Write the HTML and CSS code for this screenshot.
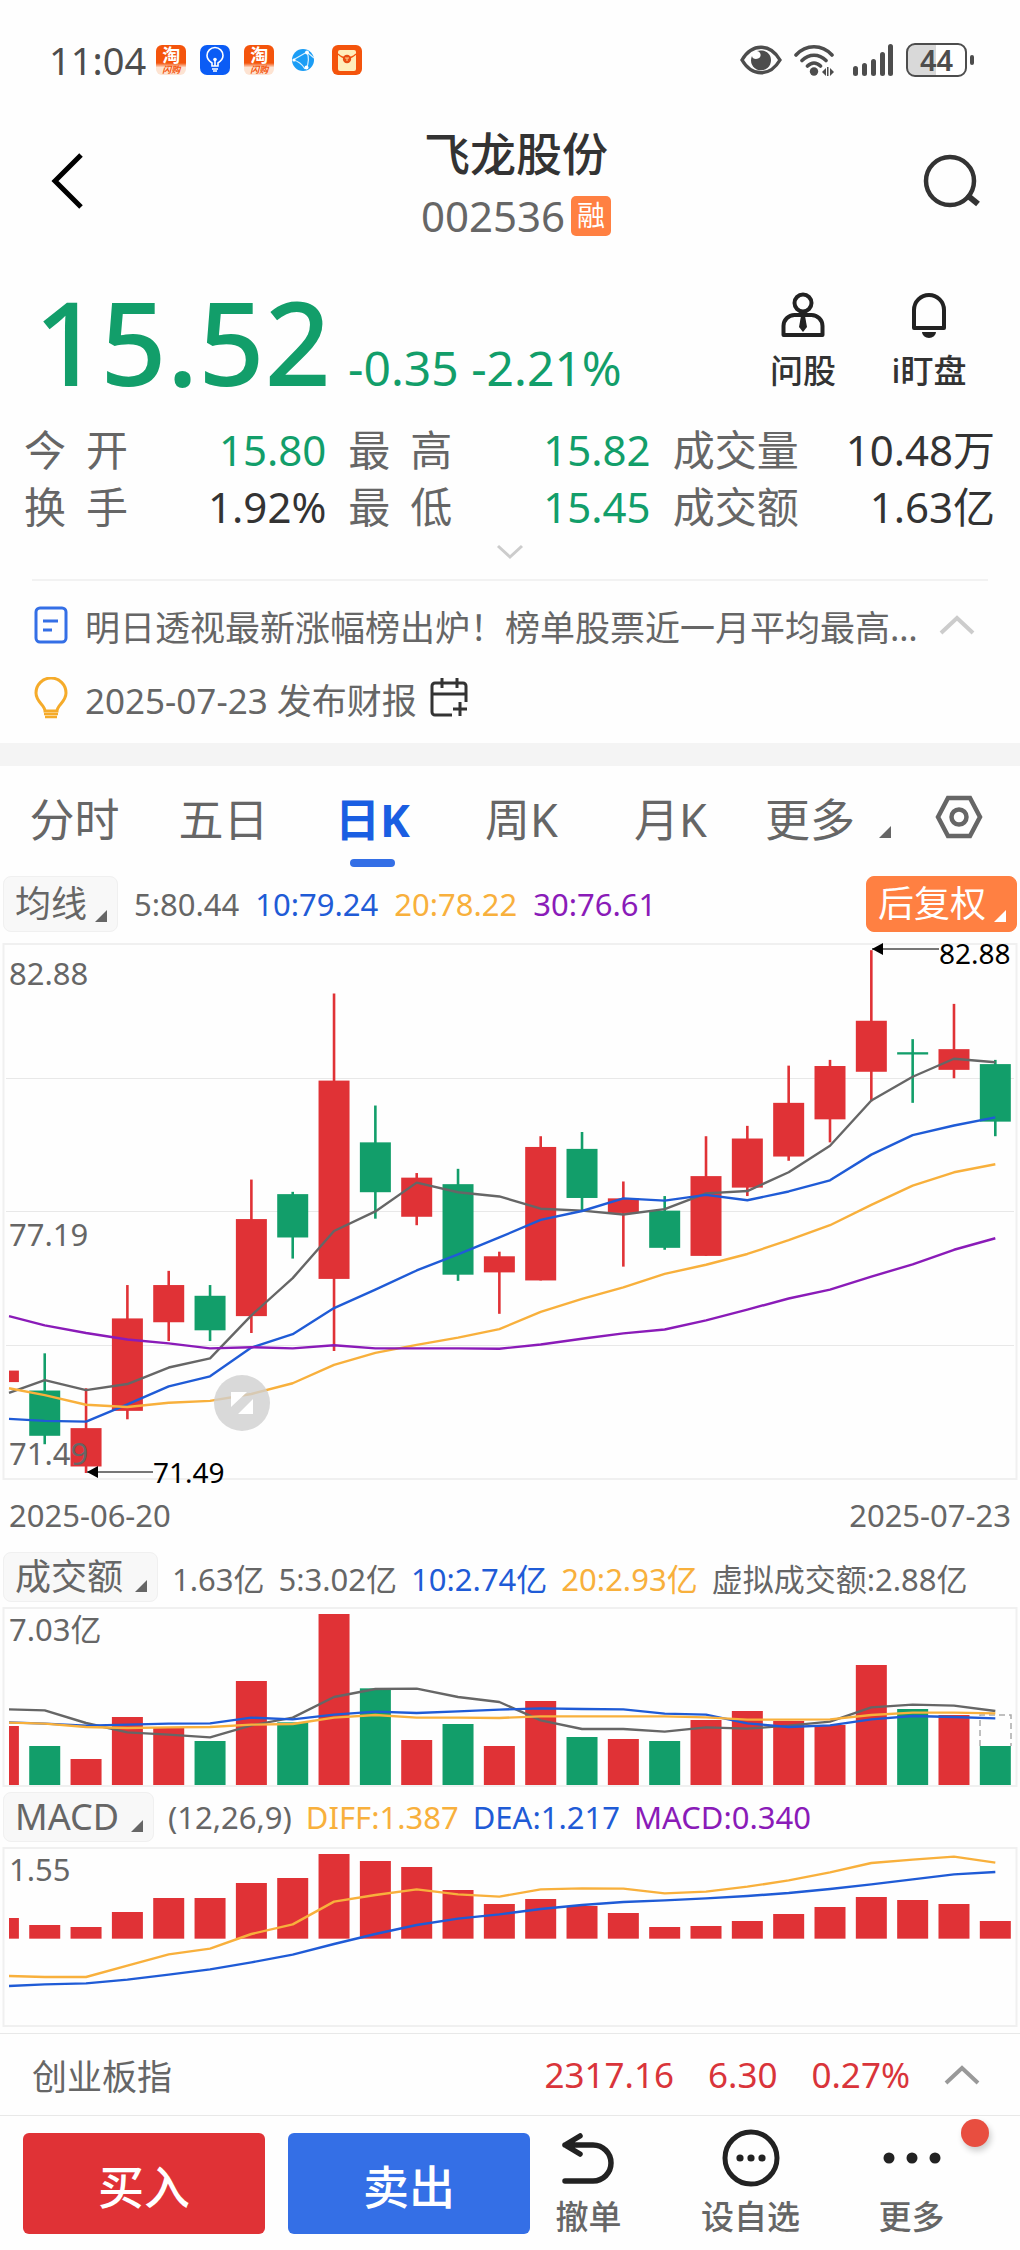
FILE: index.html
```html
<!DOCTYPE html>
<html lang="zh-CN">
<head>
  <meta charset="UTF-8" />
  <meta name="viewport" content="width=device-width, initial-scale=1.0"/>
  <title>飞龙股份 002536</title>
  <link rel="stylesheet" href="styles.css">
</head>
<body>
  <div class="status-bar">
    <span class="clock">11:04</span>
    <span class="app-icon taobao"><b>淘</b><i>闪购</i></span>
    <svg class="app-icon" viewBox="0 0 30 30">
      <rect width="30" height="30" rx="7" fill="#0b5cf5"/>
      <path d="M12 21v-3c-3-2-5-4-5-7.500a8 8 0 0 1 16 0c0 3.500-2 5.500-5 7.500v3zM12 24h6M13 26h4M15 15v6" fill="none" stroke="#fff" stroke-width="1.600"/>
      <circle cx="15" cy="14.500" r="1.800" fill="#fff"/>
    </svg>
    <span class="app-icon taobao"><b>淘</b><i>闪购</i></span>
    <svg class="app-icon" viewBox="0 0 30 30">
      <circle cx="15" cy="15" r="11" fill="#1b9df5"/>
      <path d="M5 15l14-8M5 15c5 1 9 4 12 9M19 7c2 5 2 11-1 17M19 7l7 6" fill="none" stroke="#d9f0ff" stroke-width="1.200"/>
      <circle cx="19" cy="7.500" r="2" fill="#fff"/><circle cx="6" cy="15" r="1.600" fill="#fff"/><circle cx="18.500" cy="22.500" r="2" fill="#fff"/>
    </svg>
    <svg class="app-icon" viewBox="0 0 30 30">
      <rect width="30" height="30" rx="6" fill="#f4540c"/>
      <rect x="6" y="5" width="18" height="21" rx="2" fill="#ffeebb"/>
      <path d="M6 9c3 3 5 4 9 4s6-1 9-4" fill="none" stroke="#f4540c" stroke-width="1.200"/>
      <circle cx="15" cy="14" r="4.200" fill="#e84d12"/><path d="M13 13h4M15 13v3" stroke="#ffd28a" stroke-width="1"/>
    </svg>
    <div class="status-right">
      <svg width="42" height="30" viewBox="0 0 42 30">
        <path d="M2 15C12-2 30-2 40 15C30 32 12 32 2 15z" fill="none" stroke="#4d4d4d" stroke-width="3.400"/>
        <path d="M17 6c5 1 5 8-1 8-2 0-4-1-4-3a10 10 0 1 0 19 4c0-7-7-11-14-9z" fill="#4d4d4d"/>
      </svg>
      <svg width="41" height="32" viewBox="0 0 41 32">
        <g fill="none" stroke="#4d4d4d" stroke-width="3.600" stroke-linecap="round">
          <path d="M2 11C12 0 28 0 38 11M8 16.500c7-7 17-7 24 0M13.500 22c4-4 9-4 13 0"/>
        </g>
        <circle cx="20" cy="27.500" r="4.200" fill="#4d4d4d"/>
        <path d="M28 28l4-4v8zM40 28l-4-4v8zM33 23h1.500v9H33z" fill="#4d4d4d"/>
      </svg>
      <svg class="signal" width="41" height="32" viewBox="0 0 41 32" fill="#4d4d4d">
        <rect x="0" y="22" width="5" height="10" rx="2.500"/><rect x="9" y="19" width="5" height="13" rx="2.500"/>
        <rect x="18" y="15" width="5" height="17" rx="2.500"/><rect x="27" y="8" width="5" height="24" rx="2.500"/>
        <rect x="35" y="0" width="5" height="32" rx="2.500"/>
      </svg>
      <span class="battery">44</span>
    </div>
  </div>

  <header class="header">
    <button class="icon-btn" aria-label="返回">
      <svg width="34" height="58" viewBox="0 0 34 58"><path d="M30 3L4 29l26 26" fill="none" stroke="#000" stroke-width="5"/></svg>
    </button>
    <div class="stock">
      <h1>飞龙股份</h1>
      <p>002536<span class="margin-tag">融</span></p>
    </div>
    <button class="icon-btn search" aria-label="搜索">
      <svg width="58" height="54" viewBox="0 0 58 54"><circle cx="27" cy="27" r="24" fill="none" stroke="#333" stroke-width="4.500"/><path d="M44 41l11 9" stroke="#333" stroke-width="6"/></svg>
    </button>
  </header>

  <section class="price-row">
    <div class="price">15.52</div>
    <div class="change">-0.35 -2.21%</div>
    <div class="tools">
      <button class="tool">
        <svg width="46" height="46" viewBox="0 0 46 46">
          <g fill="none" stroke="#222" stroke-width="4"><circle cx="23" cy="11" r="8.500"/><path d="M3.500 43V34a11 11 0 0 1 11-11h17a11 11 0 0 1 11 11v9z" stroke-linejoin="round"/></g>
          <path d="M21 24h4l2 11-4 5-4-5z" fill="#222"/>
        </svg>
        问股
      </button>
      <button class="tool">
        <svg width="46" height="46" viewBox="0 0 46 46">
          <path d="M8 36V18a15 15 0 0 1 30 0v18z" fill="none" stroke="#222" stroke-width="4" stroke-linejoin="round"/>
          <path d="M16 40h14a7 6 0 0 1-14 0z" fill="#222"/>
        </svg>
        i盯盘
      </button>
    </div>
  </section>

  <section class="quotes">
    <div class="quote"><span class="spread">今 开</span><b class="down">15.80</b></div>
    <div class="quote"><span class="spread">最 高</span><b class="down">15.82</b></div>
    <div class="quote"><span>成交量</span><b>10.48万</b></div>
    <div class="quote"><span class="spread">换 手</span><b>1.92%</b></div>
    <div class="quote"><span class="spread">最 低</span><b class="down">15.45</b></div>
    <div class="quote"><span>成交额</span><b>1.63亿</b></div>
  </section>
  <button class="expand" aria-label="展开">
    <svg width="28" height="16" viewBox="0 0 28 16"><path d="M2 2l12 11L26 2" fill="none" stroke="#ccc" stroke-width="3"/></svg>
  </button>

  <section class="notices">
    <div class="notice first">
      <svg width="34" height="40" viewBox="0 0 34 40"><rect x="2" y="3" width="30" height="34" rx="4" fill="none" stroke="#346fe6" stroke-width="3"/><path d="M9 16h15M9 25h9" stroke="#346fe6" stroke-width="3"/></svg>
      <a href="#">明日透视最新涨幅榜出炉！榜单股票近一月平均最高涨幅超过大盘</a>
      <svg class="fold" width="36" height="20" viewBox="0 0 36 20"><path d="M2 18L18 3l16 15" fill="none" stroke="#ccc" stroke-width="4"/></svg>
    </div>
    <div class="notice">
      <svg width="34" height="42" viewBox="0 0 34 42"><path d="M11 34c0-6-9-9-9-18a15 15 0 0 1 30 0c0 9-9 12-9 18z" fill="none" stroke="#f5ab2a" stroke-width="3"/><path d="M10 37h14M11 40h12" stroke="#f5ab2a" stroke-width="2.500"/></svg>
      <span>2025-07-23 发布财报</span>
      <svg width="38" height="40" viewBox="0 0 38 40"><path d="M22 37H5a3 3 0 0 1-3-3V8a3 3 0 0 1 3-3h28a3 3 0 0 1 3 3v16M2 16h34M12 0v10M27 0v10M30 24v14M23 31h14" fill="none" stroke="#333" stroke-width="3"/></svg>
    </div>
  </section>

  <nav class="tabs">
    <button>分时</button>
    <button>五日</button>
    <button class="active">日K</button>
    <button>周K</button>
    <button>月K</button>
    <button class="more">更多<i class="tri"></i></button>
    <button aria-label="设置">
      <svg width="48" height="44" viewBox="0 0 48 44"><g fill="none" stroke="#666" stroke-width="4.500"><path d="M13 3h22l10 19-10 19H13L3 22z"/><circle cx="24" cy="22" r="7.500"/></g></svg>
    </button>
  </nav>

  <div class="legend main">
    <button class="chip">均线<i class="tri"></i></button>
    <span>5:80.44</span><span class="c-blue">10:79.24</span><span class="c-gold">20:78.22</span><span class="c-purple">30:76.61</span>
    <button class="chip orange">后复权<i class="tri"></i></button>
  </div>
  <svg class="chart" id="price-chart" viewBox="0 0 1020 540"></svg>
  <div class="dates"><span>2025-06-20</span><span>2025-07-23</span></div>

  <div class="legend">
    <button class="chip">成交额<i class="tri"></i></button>
    <span>1.63亿</span><span>5:3.02亿</span><span class="c-blue">10:2.74亿</span><span class="c-gold">20:2.93亿</span><span>虚拟成交额:2.88亿</span>
  </div>
  <svg class="chart" id="volume-chart" viewBox="0 0 1020 182"></svg>

  <div class="legend">
    <button class="chip">MACD<i class="tri"></i></button>
    <span>(12,26,9)</span><span class="c-gold">DIFF:1.387</span><span class="c-blue">DEA:1.217</span><span class="c-purple">MACD:0.340</span>
  </div>
  <svg class="chart" id="macd-chart" viewBox="0 0 1020 182"></svg>

  <section class="index-row">
    <span class="index-name">创业板指</span>
    <span>2317.16</span><span>6.30</span><span>0.27%</span>
    <svg width="36" height="20" viewBox="0 0 36 20"><path d="M2 18L18 3l16 15" fill="none" stroke="#999" stroke-width="4"/></svg>
  </section>

  <footer class="actions">
    <button class="trade buy">买入</button>
    <button class="trade sell">卖出</button>
    <button class="action">
      <svg width="58" height="58" viewBox="0 0 58 58"><path d="M5 16h28a18 18 0 0 1 0 36H5M20 7L5 16l15 9" fill="none" stroke="#222" stroke-width="5.500" stroke-linecap="round" stroke-linejoin="round"/></svg>
      撤单
    </button>
    <button class="action">
      <svg width="58" height="58" viewBox="0 0 58 58"><circle cx="29" cy="29" r="26" fill="none" stroke="#222" stroke-width="5"/><g fill="#222"><circle cx="18" cy="29" r="3.600"/><circle cx="29" cy="29" r="3.600"/><circle cx="40" cy="29" r="3.600"/></g></svg>
      设自选
    </button>
    <button class="action">
      <svg width="58" height="58" viewBox="0 0 58 58" fill="#222"><circle cx="6" cy="29" r="5.500"/><circle cx="29" cy="29" r="5.500"/><circle cx="52" cy="29" r="5.500"/></svg>
      更多
      <i class="dot"></i>
    </button>
  </footer>

  <script>
    const RED = '#e03236', GREEN = '#129e6a';
    const GREY = '#666', BLUE = '#1f5bd6', GOLD = '#f8b03c', PURPLE = '#8a1bb8';
    const STEP = 41.33, BAR = 31;

    // r = up, g = down: [colour, high, body top, body bottom, low]
    const candles = [
      ['r', 1146, 1146, 1176, 1176], ['g', 1101, 1198, 1316, 1338], ['r', 1192, 1296, 1396, 1413],
      ['r', 923, 1010, 1251, 1273], ['r', 886, 923, 1020, 1069], ['g', 923, 951, 1041, 1069],
      ['r', 648, 751, 1004, 1048], ['g', 680, 686, 799, 854], ['r', 163, 390, 907, 1095],
      ['g', 455, 551, 681, 750], ['r', 631, 643, 745, 767], ['g', 620, 660, 896, 912],
      ['r', 836, 848, 890, 998], ['r', 535, 563, 911, 911], ['g', 524, 568, 696, 728],
      ['r', 653, 697, 735, 875], ['g', 691, 729, 826, 831], ['r', 535, 639, 847, 847],
      ['r', 508, 541, 669, 691], ['r', 351, 448, 588, 599], ['r', 336, 352, 491, 551],
      ['r', 50, 234, 367, 444], ['g', 282, 316, 322, 448], ['r', 190, 308, 362, 384],
      ['g', 336, 347, 497, 535]
    ];
    const ma5 = [1204, 1171, 1197, 1181, 1138, 1114, 1002, 905, 782, 731, 656, 681, 692, 724, 729, 739, 725, 684, 678, 629, 560, 442, 380, 333, 342];
    const ma10 = [1272, 1277, 1279, 1234, 1187, 1161, 1086, 1051, 983, 935, 885, 843, 799, 753, 730, 697, 703, 688, 702, 679, 650, 583, 532, 507, 486];
    const ma20 = [1192, 1210, 1235, 1241, 1230, 1225, 1207, 1179, 1131, 1100, 1079, 1060, 1038, 993, 959, 929, 894, 870, 842, 806, 767, 714, 664, 629, 608];
    const ma30 = [1004, 1028, 1048, 1065, 1075, 1088, 1085, 1088, 1080, 1088, 1088, 1088, 1089, 1078, 1063, 1049, 1039, 1015, 987, 958, 935, 901, 869, 831, 801];

    const volume = [585, 645, 684, 558, 590, 630, 450, 574, 249, 472, 627, 579, 645, 510, 618, 624, 630, 567, 540, 570, 582, 402, 534, 552, 645];
    const vol5 = [535, 538, 576, 604, 611, 619, 583, 560, 498, 474, 473, 498, 513, 568, 594, 594, 602, 589, 593, 584, 572, 529, 521, 524, 540];
    const vol10 = [574, 578, 584, 581, 578, 577, 560, 565, 551, 542, 546, 541, 536, 532, 534, 535, 548, 551, 577, 588, 583, 565, 555, 558, 562];
    const vol20 = [575, 578, 588, 591, 589, 588, 581, 579, 560, 552, 560, 560, 561, 556, 556, 556, 556, 559, 566, 566, 565, 552, 545, 545, 547];

    const macd = [1161, 1182, 1188, 1143, 1101, 1101, 1056, 1041, 969, 990, 1008, 1077, 1119, 1104, 1125, 1146, 1188, 1185, 1170, 1149, 1128, 1098, 1107, 1119, 1170];
    const diff = [1335, 1338, 1338, 1304, 1270, 1253, 1209, 1180, 1112, 1092, 1075, 1090, 1097, 1075, 1072, 1073, 1087, 1082, 1067, 1048, 1024, 996, 986, 977, 995];
    const dea = [1365, 1360, 1357, 1346, 1331, 1315, 1294, 1271, 1239, 1209, 1182, 1163, 1150, 1134, 1122, 1113, 1108, 1102, 1095, 1086, 1074, 1060, 1045, 1030, 1023];

    const priceY = v => v / 2.607 - 11;
    const volY = v => v / 3 - 75;
    const macdY = v => v / 3 - 315;
    const x = i => 3.4 + STEP * i;

    // the first bar is cut off by the left edge of the plot
    function bar(i, top, bottom, color) {
      const left = Math.max(9, x(i) - BAR / 2);
      return `<rect x="${left}" y="${top}" width="${x(i) + BAR / 2 - left}" height="${bottom - top}" fill="${color}"/>`;
    }

    function line(data, y, color) {
      const points = data.map((v, i) => `${Math.max(9, x(i))},${y(v)}`).join(' ');
      return `<polyline points="${points}" fill="none" stroke="${color}" stroke-width="2.4" stroke-linejoin="round"/>`;
    }

    function frame(height) {
      return `<rect x="3.5" y="2" width="1013" height="${height}" fill="none" stroke="#f0f0f0" stroke-width="2"/>`;
    }

    function drawPrice() {
      let out = frame(535);
      [136, 269, 403].forEach(y => {
        out += `<path d="M6 ${y}.500H1014" stroke="#e8e8e8"/>`;
      });
      candles.forEach(([c, high, top, bottom, low], i) => {
        const color = c === 'r' ? RED : GREEN;
        if (low > bottom || high < top) {
          out += `<path d="M${x(i)} ${priceY(high)}V${priceY(low)}" stroke="${color}" stroke-width="2.6"/>`;
        }
        out += bar(i, priceY(top), priceY(bottom), color);
      });
      out += line(ma5, priceY, GREY) + line(ma10, priceY, BLUE) + line(ma20, priceY, GOLD) + line(ma30, priceY, PURPLE);
      out += `<text x="9" y="43">82.88</text><text x="9" y="304">77.19</text><text x="9" y="523">71.49</text>`;
      // high and low markers
      out += `<path d="M872 7H939M87 530H153" stroke="#777" stroke-width="2"/>
        <path d="M872 7l11-6v12zM87 530l11-6v12z" fill="#000"/>
        <text class="mark" x="939" y="22">82.88</text><text class="mark" x="153" y="541">71.49</text>`;
      // full screen handle
      out += `<circle cx="242" cy="461" r="28" fill="#cfcfcf" opacity=".8"/>
        <path d="M231 450h16l-16 15zM253 457v15h-15z" fill="#fff"/>`;
      document.getElementById('price-chart').innerHTML = out;
    }

    function drawVolume() {
      let out = frame(178);
      volume.forEach((v, i) => {
        out += bar(i, volY(v), 179, candles[i][0] === 'r' ? RED : GREEN);
      });
      out += `<path d="M980 140V109H1011V140" fill="none" stroke="#aaa" stroke-width="1.5" stroke-dasharray="6 4"/>`;
      out += line(vol5, volY, GREY) + line(vol10, volY, BLUE) + line(vol20, volY, GOLD);
      out += `<text x="9" y="35">7.03亿</text>`;
      document.getElementById('volume-chart').innerHTML = out;
    }

    function drawMacd() {
      let out = frame(178);
      macd.forEach((v, i) => {
        out += bar(i, macdY(v), macdY(1223), RED);
      });
      out += line(diff, macdY, GOLD) + line(dea, macdY, BLUE);
      out += `<text x="9" y="35">1.55</text>`;
      document.getElementById('macd-chart').innerHTML = out;
    }

    drawPrice();
    drawVolume();
    drawMacd();
  </script>
</body>
</html>
```
FILE: styles.css
```css
* {
  box-sizing: border-box;
}
body {
  margin: 0;
  background: #fefefe;
  color: #666;
  font-family: "Noto Sans", "Noto Sans CJK SC", sans-serif;
  font-size: 31px;
}
button {
  border: 0;
  padding: 0;
  margin: 0;
  background: none;
  color: inherit;
  font: inherit;
  cursor: pointer;
}
svg {
  display: block;
  flex: none;
}
.status-bar {
  display: flex;
  align-items: center;
  gap: 14px;
  height: 110px;
  padding: 10px 53px 0 49px;
  color: #4d4d4d;
}
.clock {
  font-size: 38px;
  line-height: 40px;
  margin-right: -4px;
}
.app-icon {
  width: 30px;
  height: 30px;
}
.taobao {
  display: flex;
  flex-direction: column;
  align-items: center;
  border-radius: 6px;
  overflow: hidden;
  background: linear-gradient(#f4540c 60%, #fde3d2 75%);
}
.taobao b {
  color: #fff;
  font-size: 18px;
  line-height: 20px;
}
.taobao i {
  color: #f4540c;
  font-size: 9px;
  font-weight: bold;
  line-height: 10px;
}
.status-right {
  display: flex;
  align-items: center;
  gap: 12px;
  margin-left: auto;
}
.signal {
  margin-left: 6px;
}
.battery {
  position: relative;
  width: 61px;
  height: 34px;
  border: 2px solid #4d4d4d;
  border-radius: 9px;
  background: linear-gradient(90deg, #d9d9d9 50%, #fff 50%);
  font-size: 29px;
  font-weight: 600;
  line-height: 30px;
  text-align: center;
}
.battery::after {
  content: "";
  position: absolute;
  right: -9px;
  top: 10px;
  width: 4px;
  height: 10px;
  border-radius: 2px;
  background: #4d4d4d;
}
.header {
  display: flex;
  justify-content: space-between;
  align-items: center;
  padding: 0 39px 0 51px;
}
.stock {
  padding: 12px 0 5px;
  text-align: center;
}
.stock h1 {
  margin: 0;
  color: #333;
  font-size: 46px;
  font-weight: 500;
  line-height: 62px;
}
.stock p {
  display: flex;
  align-items: center;
  justify-content: center;
  gap: 6px;
  margin: 0;
  font-size: 42px;
  line-height: 63px;
}
.icon-btn {
  width: 58px;
}
.margin-tag {
  width: 40px;
  height: 40px;
  border-radius: 5px;
  background: #ff8042;
  color: #fff;
  font-size: 28px;
  line-height: 38px;
}
.price-row {
  display: flex;
  align-items: baseline;
  padding: 20px 28px 11px 34px;
  color: #129e6a;
}
.price {
  width: 314px;
  font-size: 116px;
  font-weight: 500;
  line-height: 138px;
}
.change {
  font-size: 48px;
  line-height: 60px;
}
.tools {
  display: flex;
  align-self: flex-start;
  margin-left: auto;
  padding-top: 20px;
}
.tool {
  display: flex;
  flex-direction: column;
  align-items: center;
  gap: 11px;
  width: 126px;
  color: #333;
  font-size: 33px;
  font-weight: 500;
  line-height: 44px;
}
.quotes {
  display: grid;
  grid-template-columns: 302fr 302fr 322fr;
  column-gap: 22px;
  padding: 0 25px 0 24px;
  font-size: 42px;
  line-height: 57px;
}
.quote {
  display: flex;
  justify-content: space-between;
}
.quote b {
  color: #333;
  font-weight: normal;
}
.quote b.down {
  color: #129e6a;
}
.spread {
  width: 104px;
  text-align-last: justify;
}
.expand {
  display: flex;
  justify-content: center;
  width: 100%;
  height: 44px;
  padding-top: 9px;
}
.notices {
  margin: 0 32px;
  padding-bottom: 16px;
  border-top: 2px solid #f2f2f2;
}
.notice {
  display: flex;
  align-items: center;
  gap: 13px;
  height: 58px;
  padding: 0 13px 0 2px;
  margin-left: 0;
  font-size: 35px;
}
.notice.first {
  height: 88px;
}
.notice a {
  flex: 1;
  min-width: 0;
  margin-left: 4px;
  overflow: hidden;
  color: inherit;
  text-decoration: none;
  text-overflow: ellipsis;
  white-space: nowrap;
}
.notice span {
  margin-left: 4px;
}
.tabs {
  display: grid;
  grid-template-columns: repeat(5, 149fr) 153fr 122fr;
  border-top: 23px solid #f4f4f4;
}
.tabs button {
  position: relative;
  display: flex;
  align-items: center;
  justify-content: center;
  height: 102px;
  font-size: 45px;
}
.tabs .active {
  color: #1a5ee2;
  font-weight: bold;
}
.tabs .active::after {
  content: "";
  position: absolute;
  bottom: 1px;
  width: 45px;
  height: 8px;
  border-radius: 4px;
  background: #346fe6;
}
.tri {
  align-self: flex-end;
  width: 0;
  height: 0;
  border-left: 12px solid transparent;
  border-bottom: 12px solid currentColor;
}
.tabs .tri {
  margin: 0 0 30px 24px;
}
.tabs .more {
  justify-content: flex-end;
  padding-right: 7px;
}
.legend {
  display: flex;
  align-items: center;
  gap: 14px;
  padding: 4px 3px;
  white-space: nowrap;
}
.legend.main {
  gap: 16px;
  padding: 8px 3px 10px;
}
.chip {
  display: flex;
  align-items: center;
  gap: 12px;
  height: 50px;
  padding: 0 10px 0 11px;
  border: 1px solid #f0f0f0;
  border-radius: 8px;
  background: #f8f8f8;
  font-size: 36px;
  line-height: 48px;
}
.main .chip {
  gap: 8px;
  height: 56px;
}
.chip .tri {
  margin-bottom: 9px;
}
.chip.orange {
  margin-left: auto;
  border-color: #ff8042;
  background: #ff8042;
  color: #fff;
}
.c-blue {
  color: #1f5bd6;
}
.c-gold {
  color: #f8b03c;
}
.c-purple {
  color: #8a1bb8;
}
.chart {
  width: 100%;
  height: auto;
  overflow: visible;
}
.chart text {
  fill: #666;
  font-size: 31px;
}
.chart .mark {
  fill: #000;
  font-size: 28px;
}
.dates {
  display: flex;
  justify-content: space-between;
  padding: 0 9px;
  line-height: 66px;
}
.index-row {
  display: flex;
  align-items: center;
  gap: 34px;
  height: 83px;
  margin-top: 5px;
  padding: 0 40px 0 32px;
  border-top: 1px solid #e8e8e8;
  border-bottom: 1px solid #e8e8e8;
  color: #d9343a;
  font-size: 35px;
}
.index-name {
  margin-right: auto;
  color: #666;
}
.actions {
  display: grid;
  grid-template-columns: 236fr 236fr 159fr 157fr 157fr;
  padding: 17px 28px 17px 23px;
}
.trade {
  height: 101px;
  border-radius: 6px;
  color: #fff;
  font-size: 46px;
  font-weight: 500;
}
.buy {
  background: #e03236;
}
.sell {
  margin-left: 23px;
  margin-right: -23px;
  background: #346fe6;
}
.action {
  position: relative;
  display: flex;
  flex-direction: column;
  align-items: center;
  height: 101px;
  font-size: 33px;
  font-weight: 500;
  line-height: 44px;
  gap: 8px;
  margin: -4px 0 0;
}
.dot {
  position: absolute;
  top: -10px;
  right: 3px;
  width: 28px;
  height: 28px;
  border-radius: 50%;
  background: #e84e40;
  box-shadow: 2px 4px 6px rgba(0, 0, 0, 0.2);
}
```
